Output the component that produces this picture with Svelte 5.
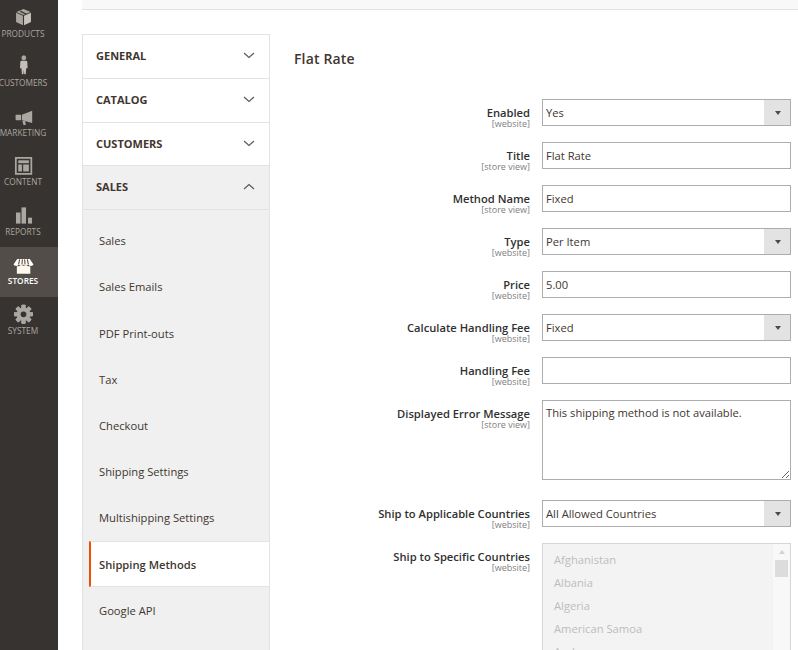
<script>
  const menu = [
    { name: 'Products', icon: 'box' },
    { name: 'Customers', icon: 'person' },
    { name: 'Marketing', icon: 'horn' },
    { name: 'Content', icon: 'layout' },
    { name: 'Reports', icon: 'bars' },
    { name: 'Stores', icon: 'shop', active: true },
    { name: 'System', icon: 'gear' }
  ];

  const groups = ['General', 'Catalog', 'Customers'];
  const salesItems = [
    'Sales',
    'Sales Emails',
    'PDF Print-outs',
    'Tax',
    'Checkout',
    'Shipping Settings',
    'Multishipping Settings',
    'Shipping Methods',
    'Google API'
  ];

  const countries = ['Afghanistan', 'Albania', 'Algeria', 'American Samoa', 'Andorra'];

  // gear teeth for the System icon
  const teeth = [0, 45, 90, 135, 180, 225, 270, 315];
</script>

<div class="page">
  <nav class="sidebar">
    {#each menu as item}
      <div class="menu-item" class:active={item.active}>
        <svg class="menu-icon" viewBox="0 0 24 24" aria-hidden="true">
          {#if item.icon === 'box'}
            <path d="M12 2.5 21 6.4 12 10.2 3 6.4Z" fill="#aaa6a0" />
            <path d="M7.8 4.4 16.2 8.4 16.2 10.2 7.8 6.2Z" fill="#373330" />
            <path d="M2.6 7.4 11.3 11.2V23L2.6 19Z" fill="#aaa6a0" />
            <path d="M21.4 7.4 12.7 11.2V23L21.4 19Z" fill="#c8c3bb" />
          {:else if item.icon === 'person'}
            <ellipse cx="12.4" cy="2.2" rx="3" ry="3.2" fill="#aaa6a0" />
            <path d="M8 7.6Q8 6 9.6 6H15.2Q16.8 6 16.8 7.6L17.2 15.6H15.4L14.8 23H12.9L12.4 17.5 11.9 23H10L9.4 15.6H7.6Z" fill="#c4bfb8" />
          {:else if item.icon === 'horn'}
            <path d="M23 6V21.5L10 18V11Z" fill="#aaa6a0" />
            <rect x="2" y="11" width="7" height="7" rx="1" fill="#aaa6a0" />
            <path d="M10.5 19H14L15 24H12Z" fill="#aaa6a0" />
          {:else if item.icon === 'layout'}
            <path fill-rule="evenodd" d="M1.2 2.5H23V25H1.2ZM3.4 4.7V22.8H20.8V4.7Z" fill="#aaa6a0" />
            <rect x="5.4" y="6.7" width="13.4" height="3.6" fill="#aaa6a0" />
            <rect x="5.4" y="12" width="4.6" height="8.8" fill="#aaa6a0" />
            <rect x="11.6" y="12" width="7.2" height="8.8" fill="#aaa6a0" />
          {:else if item.icon === 'bars'}
            <rect x="2.5" y="9.5" width="5.7" height="14" fill="#aaa6a0" />
            <rect x="9.5" y="3" width="5.7" height="20.5" fill="#aaa6a0" />
            <rect x="17.7" y="16" width="5.1" height="7.5" fill="#aaa6a0" />
          {:else if item.icon === 'shop'}
            <path d="M3.6 15.5Q6 15.8 7.6 14.4 9.8 16 12 14.4 14.2 16 16.4 14.4 18 15.8 20.6 15.5V25H3.6Z" fill="#fdf8ec" />
            <path d="M4 6.3H20L24.6 13.4Q23.6 15.2 21.4 15.2 19 15.2 17.6 13.4 16.4 15.2 14.6 15.2 13 15.2 12 13.4 11 15.2 9.4 15.2 7.6 15.2 6.4 13.4 5 15.2 2.8 15.2 .4 15.2 -.6 13.4Z" fill="#fff" />
            <path d="M7.2 6.8 5.8 13.2M10.6 6.8 10 13.2M13.4 6.8 14 13.2M16.8 6.8 18.2 13.2" stroke="#6a4a35" stroke-width="1.4" fill="none" />
          {:else}
            <g fill="#aaa6a0" transform="translate(0 1)">
              {#each teeth as a}
                <rect x="9.4" y="0" width="5.2" height="24" rx="1" transform="rotate({a} 12 12)" />
              {/each}
              <circle cx="12" cy="12" r="8.6" />
            </g>
            <circle cx="12" cy="13" r="3.6" fill="#373330" />
          {/if}
        </svg>
        <span class="menu-label">{item.name}</span>
      </div>
    {/each}
  </nav>

  <div class="content">
    <div class="top-strip"></div>

    <div class="columns">
      <aside class="config-nav">
        {#each groups as group}
          <div class="group">
            <span>{group}</span>
            <svg class="chevron" viewBox="0 0 12 7" aria-hidden="true">
              <path d="M1 1 6 5.5 11 1" />
            </svg>
          </div>
        {/each}
        <div class="group open">
          <span>Sales</span>
          <svg class="chevron" viewBox="0 0 12 7" aria-hidden="true">
            <path d="M1 6 6 1.5 11 6" />
          </svg>
        </div>
        <ul class="sub-list">
          {#each salesItems as item}
            <li class:current={item === 'Shipping Methods'}>{item}</li>
          {/each}
        </ul>
      </aside>

      <section class="form-area">
        <h1>Flat Rate</h1>

        <div class="row">
          <div class="label">Enabled<small>[website]</small></div>
          <div class="select-wrap">
            <select><option>Yes</option></select>
          </div>
        </div>
        <div class="row">
          <div class="label">Title<small>[store view]</small></div>
          <input type="text" value="Flat Rate" />
        </div>
        <div class="row">
          <div class="label">Method Name<small>[store view]</small></div>
          <input type="text" value="Fixed" />
        </div>
        <div class="row">
          <div class="label">Type<small>[website]</small></div>
          <div class="select-wrap">
            <select><option>Per Item</option></select>
          </div>
        </div>
        <div class="row">
          <div class="label">Price<small>[website]</small></div>
          <input type="text" value="5.00" />
        </div>
        <div class="row">
          <div class="label">Calculate Handling Fee<small>[website]</small></div>
          <div class="select-wrap">
            <select><option>Fixed</option></select>
          </div>
        </div>
        <div class="row">
          <div class="label">Handling Fee<small>[website]</small></div>
          <input type="text" value="" />
        </div>
        <div class="row tall">
          <div class="label">Displayed Error Message<small>[store view]</small></div>
          <textarea>This shipping method is not available.</textarea>
        </div>
        <div class="row">
          <div class="label">Ship to Applicable Countries<small>[website]</small></div>
          <div class="select-wrap">
            <select><option>All Allowed Countries</option></select>
          </div>
        </div>
        <div class="row">
          <div class="label">Ship to Specific Countries<small>[website]</small></div>
          <div class="multi">
            <ul>
              {#each countries as country}
                <li>{country}</li>
              {/each}
            </ul>
            <div class="scrollbar">
              <span class="scroll-up"></span>
              <span class="scroll-thumb"></span>
            </div>
          </div>
        </div>
      </section>
    </div>
  </div>
</div>

<style>
  :global(body) {
    margin: 0;
    background: #fff;
    overflow: hidden;
  }

  .page {
    display: flex;
    width: 798px;
    height: 650px;
    overflow: hidden;
    font-family: "Open Sans", sans-serif;
    color: #303030;
  }

  .sidebar {
    flex: 0 0 58px;
    background: #373330;
    overflow: hidden;
  }

  .menu-item {
    height: 49.5px;
    display: flex;
    flex-direction: column;
    align-items: center;
    padding: 7px 12px 0 0;
    box-sizing: border-box;
  }

  .menu-item:first-child {
    margin-top: -0.5px;
  }

  .menu-item.active {
    background: #524d49;
  }

  .menu-icon {
    width: 19px;
    height: 19px;
    flex: none;
    overflow: visible;
  }

  .menu-label {
    font-size: 8.3px;
    line-height: 13px;
    margin-top: 1px;
    text-transform: uppercase;
    color: #aaa6a0;
    white-space: nowrap;
  }

  .active .menu-label {
    color: #fff;
    font-weight: 600;
  }

  .content {
    flex: 1;
    min-width: 0;
    padding-left: 24px;
  }

  .top-strip {
    height: 9px;
    background: #f8f8f8;
    border-bottom: 1px solid #e3e3e3;
  }

  .columns {
    display: flex;
    margin-top: 24px;
  }

  .config-nav {
    flex: 0 0 188px;
    box-sizing: border-box;
    border: 1px solid #e3e3e3;
    border-bottom: 0;
    height: 640px;
    background: #f0f0f0;
  }

  .group {
    height: 44px;
    box-sizing: border-box;
    display: flex;
    align-items: center;
    justify-content: space-between;
    padding: 0 14px 2px 13px;
    background: #fff;
    border-bottom: 1px solid #e3e3e3;
    font-size: 11px;
    font-weight: 700;
    text-transform: uppercase;
    color: #41362f;
  }

  .group:nth-child(3) {
    height: 43px;
  }

  .group.open {
    background: #f0f0f0;
  }

  .chevron {
    width: 12px;
    height: 7px;
  }

  .chevron path {
    fill: none;
    stroke: #5e5954;
    stroke-width: 1.2;
  }

  .sub-list {
    list-style: none;
    margin: 0;
    padding: 7.7px 0 0 6px;
  }

  .sub-list li {
    height: 46.2px;
    box-sizing: border-box;
    display: flex;
    align-items: center;
    padding-left: 8px;
    font-size: 11.2px;
    color: #41362f;
    border-left: 2px solid transparent;
  }

  .sub-list li.current {
    background: #fff;
    border-left-color: #eb5202;
    border-top: 1px solid #e3e3e3;
    border-bottom: 1px solid #e3e3e3;
    font-weight: 600;
  }

  .form-area {
    flex: 1;
    min-width: 0;
    padding: 0 7px 0 24px;
  }

  h1 {
    margin: 0;
    padding-top: 15px;
    height: 65px;
    box-sizing: border-box;
    font-size: 14px;
    line-height: 19px;
    font-weight: 600;
    color: #41362f;
    letter-spacing: 0.15px;
  }

  .row {
    display: grid;
    grid-template-columns: 236px 249px;
    column-gap: 12px;
    margin-bottom: 16px;
  }

  .row.tall {
    margin-bottom: 20px;
  }

  .label {
    box-sizing: border-box;
    height: 27px;
    text-align: right;
    font-size: 11.2px;
    line-height: 14px;
    font-weight: 600;
    color: #303030;
    padding-top: 7px;
    white-space: nowrap;
  }

  .label small {
    display: block;
    font-size: 9px;
    line-height: 8px;
    font-weight: 400;
    color: #808080;
  }

  input,
  select,
  textarea {
    display: block;
    width: 100%;
    box-sizing: border-box;
    margin: 0;
    border: 1px solid #adadad;
    border-radius: 0;
    background: #fff;
    font-family: inherit;
    font-size: 11.2px;
    color: #41362f;
    outline: none;
  }

  input,
  select {
    height: 27px;
    padding: 0 3px;
  }

  textarea {
    height: 80px;
    padding: 4px 3px;
    line-height: 15px;
  }

  select {
    appearance: none;
    padding-right: 30px;
  }

  .select-wrap {
    position: relative;
  }

  .select-wrap::before {
    content: '';
    position: absolute;
    top: 1px;
    right: 1px;
    bottom: 1px;
    width: 26px;
    background: #e3e3e3;
  }

  .select-wrap::after {
    content: '';
    position: absolute;
    top: 12px;
    right: 10px;
    border-style: solid;
    border-width: 4px 3.5px 0;
    border-color: #514943 transparent transparent;
  }

  .multi {
    display: flex;
    height: 140px;
    box-sizing: border-box;
    border: 1px solid #d6d6d6;
    background: #f3f3f3;
  }

  .multi ul {
    flex: 1;
    list-style: none;
    margin: 0;
    padding: 4px 0 0 11px;
  }

  .multi li {
    height: 23px;
    line-height: 23px;
    font-size: 11.2px;
    color: #bdbdbd;
  }

  .scrollbar {
    flex: 0 0 17px;
    background: #f8f8f8;
    display: flex;
    flex-direction: column;
    align-items: center;
    padding-top: 6px;
    box-sizing: border-box;
  }

  .scroll-up {
    border-style: solid;
    border-width: 0 3.5px 4px;
    border-color: transparent transparent #d3d3d3;
  }

  .scroll-thumb {
    width: 13px;
    height: 17px;
    margin-top: 6px;
    background: #dcdcdc;
  }
</style>
